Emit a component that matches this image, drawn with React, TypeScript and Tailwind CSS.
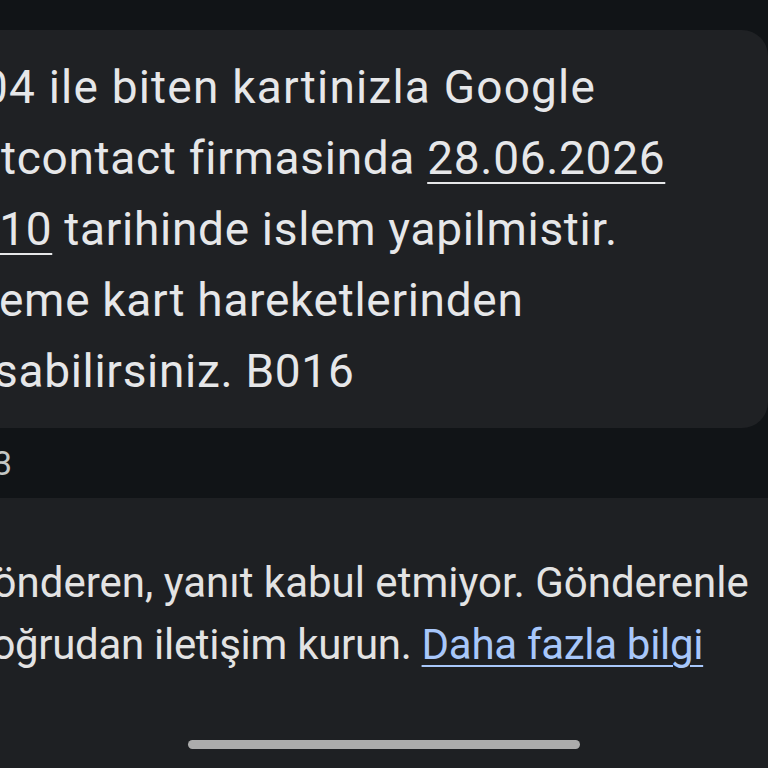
export default function App() {
  return (
    <div className="w-[768px] h-[768px] overflow-hidden bg-[#1e2023] flex flex-col font-['Roboto',sans-serif]">
      {/* Message thread area */}
      <div className="bg-[#111417] pt-[30px] flex flex-col">
        <div className="bg-[#1f2124] rounded-r-[26px] pt-[22px] pb-[21px] text-[#e6e7e9] text-[46px] tracking-[0.7px] leading-[71px] overflow-hidden">
          <div className="whitespace-nowrap ml-[-18px] tracking-[1.2px]">04 ile biten kartinizla Google</div>
          <div className="whitespace-nowrap ml-[1px]">
            tcontact firmasinda <span className="underline decoration-2 underline-offset-[8px]">28.06.2026</span>
          </div>
          <div className="whitespace-nowrap ml-[-13px]">
            <span className="underline decoration-2 underline-offset-[8px]">{'\u00a0'}10</span> tarihinde islem yapilmistir.
          </div>
          <div className="whitespace-nowrap ml-[-1px]">eme kart hareketlerinden</div>
          <div className="whitespace-nowrap ml-[-6px]">sabilirsiniz. B016</div>
        </div>
        <div className="h-[70px] flex items-center overflow-hidden">
          <span className="whitespace-nowrap ml-[-26px] text-[34px] text-[#c4c7c5]">53</span>
        </div>
      </div>

      {/* Reply disabled notice */}
      <div className="pt-[54px] text-[42px] leading-[62px] text-[#e3e3e3] overflow-hidden">
        <div className="whitespace-nowrap ml-[-36px]">Gönderen, yanıt kabul etmiyor. Gönderenle</div>
        <div className="whitespace-nowrap ml-[-32px] tracking-[-0.3px]">
          doğrudan iletişim kurun.{' '}
          <span className="text-[#a8c7fa] underline decoration-2 underline-offset-[6px]">Daha fazla bilgi</span>
        </div>
      </div>

      {/* Gesture bar */}
      <div className="mt-auto mb-[19px] flex justify-center">
        <div className="w-[392px] h-[9px] rounded-full bg-[#acacac]" />
      </div>
    </div>
  )
}
